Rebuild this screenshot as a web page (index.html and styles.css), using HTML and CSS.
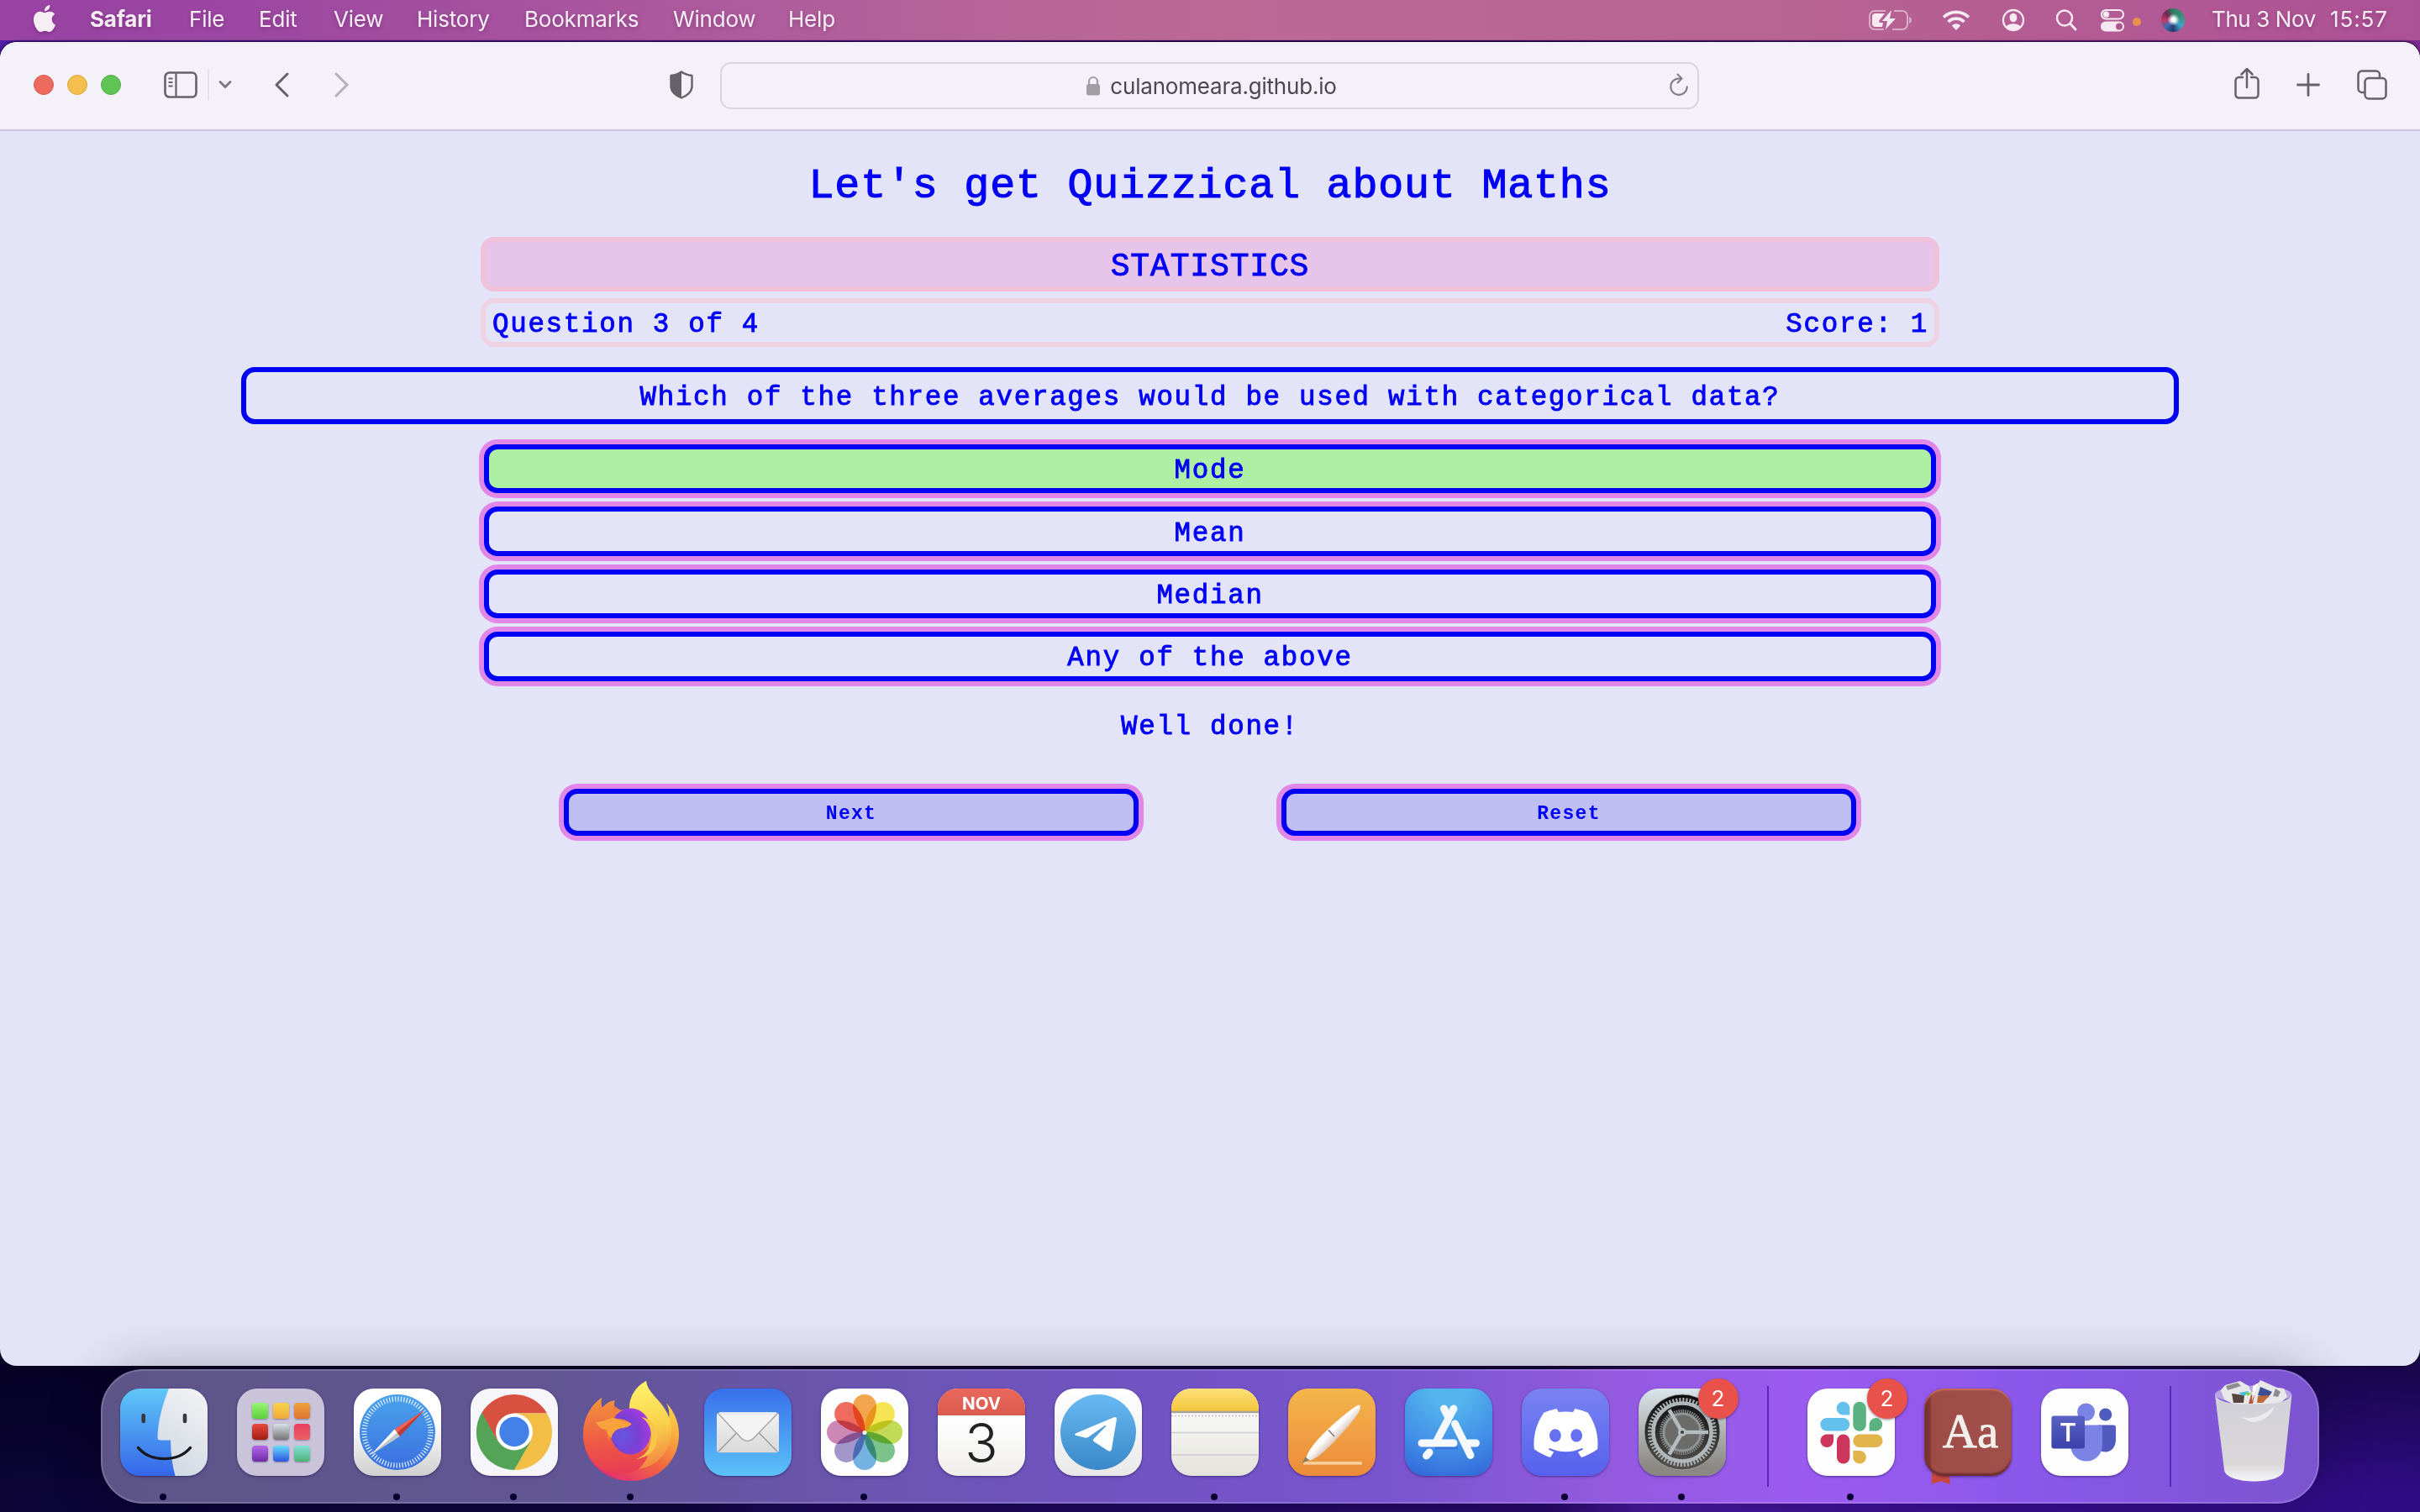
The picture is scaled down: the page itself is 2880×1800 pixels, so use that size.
FILE: index.html
```html
<!DOCTYPE html>
<html lang="en">
<head>
<meta charset="utf-8">
<title>Let's get Quizzical about Maths</title>
<link rel="stylesheet" href="styles.css">
</head>
<body>
<header class="menubar">
  <svg class="apple" viewBox="0 0 24 24"><path d="M12.152 6.896c-.948 0-2.415-1.078-3.96-1.04-2.04.027-3.91 1.183-4.961 3.014-2.117 3.675-.546 9.103 1.519 12.09 1.013 1.454 2.208 3.09 3.792 3.039 1.52-.065 2.09-.987 3.935-.987 1.831 0 2.35.987 3.96.948 1.637-.026 2.676-1.48 3.676-2.948 1.156-1.688 1.636-3.325 1.662-3.415-.039-.013-3.182-1.221-3.22-4.857-.026-3.04 2.48-4.494 2.597-4.559-1.429-2.09-3.623-2.324-4.39-2.376-2-.156-3.675 1.09-4.61 1.09zM15.53 3.83c.843-1.012 1.4-2.427 1.245-3.83-1.207.052-2.662.805-3.532 1.818-.78.896-1.454 2.338-1.273 3.714 1.338.104 2.715-.688 3.559-1.701"/></svg>
  <nav class="menus">
    <span class="menu m-app">Safari</span><span class="menu m-file">File</span><span class="menu m-edit">Edit</span><span class="menu m-view">View</span><span class="menu m-history">History</span><span class="menu m-bookmarks">Bookmarks</span><span class="menu m-window">Window</span><span class="menu">Help</span>
  </nav>
  <div class="status">
    <svg class="battery" width="52" height="26" viewBox="0 0 52 26"><g fill="none" stroke="#f7e9f2" stroke-opacity=".55" stroke-width="2"><path d="M20 2H7a6 6 0 0 0-6 6v10a6 6 0 0 0 6 6h11M30 2h10a6 6 0 0 1 6 6v10a6 6 0 0 1-6 6H28"/></g><path fill="#f7e9f2" fill-opacity=".55" d="M48 9c4 1 4 7 0 8z"/><path fill="#f7e9f2" d="M19 5H8a4 4 0 0 0-4 4v8a4 4 0 0 0 4 4h8l1-5h-4l-1-2z"/><path fill="#f7e9f2" d="M27 1 16 14h6l-2 10 12-13h-7z"/></svg>
    <svg class="wifi" width="34" height="26" viewBox="0 0 34 26"><g fill="none" stroke="#f7e9f2" stroke-width="3.6"><path d="M2 9.5a21.5 21.5 0 0 1 30 0M7.5 15a13.5 13.5 0 0 1 19 0"/></g><path fill="#f7e9f2" d="M17 25l-5.2-5.6a7.5 7.5 0 0 1 10.400 0z"/></svg>
    <svg class="user" width="28" height="28" viewBox="0 0 28 28"><circle cx="14" cy="14" r="12" fill="none" stroke="#f7e9f2" stroke-width="2.300"/><ellipse cx="14" cy="11" rx="4.400" ry="5.300" fill="#f7e9f2"/><path fill="#f7e9f2" d="M5 22c3-5 15-5 18 0-5 5-13 5-18 0z"/></svg>
    <svg class="search" width="28" height="28" viewBox="0 0 28 28"><circle cx="12" cy="11.500" r="9" fill="none" stroke="#f7e9f2" stroke-width="2.500"/><path d="M18.500 18l6.500 7" stroke="#f7e9f2" stroke-width="3" stroke-linecap="round"/></svg>
    <svg class="control" width="28" height="28" viewBox="0 0 28 28"><rect x="1" y="2" width="26" height="10.500" rx="5.200" fill="none" stroke="#f7e9f2" stroke-width="2"/><circle cx="6.500" cy="7.200" r="3.600" fill="#f7e9f2"/><rect x="0" y="15.500" width="28" height="12" rx="6" fill="#f7e9f2"/><circle cx="22" cy="21.500" r="4" fill="#b0578f"/></svg>
    <i class="mic-dot"></i>
    <i class="siri"></i>
    <span class="date">Thu 3 Nov</span><span class="time">15:57</span>
  </div>
</header>

<main class="window">
  <div class="toolbar">
    <div class="lights"><i class="red"></i><i class="yellow"></i><i class="green"></i></div>
    <svg class="sidebar" width="40" height="32" viewBox="0 0 40 32"><rect x="1.500" y="1.500" width="37" height="29" rx="5" fill="none" stroke="#656269" stroke-width="2.600"/><path d="M14.500 2v28M5.500 8.500h5M5.500 13h5M5.500 17.500h5" stroke="#656269" stroke-width="2.200"/></svg>
    <i class="divider"></i>
    <svg class="chev" width="16" height="12" viewBox="0 0 16 12"><path d="M2 2.500l6 6 6-6" fill="none" stroke="#7a777e" stroke-width="2.800" stroke-linecap="round"/></svg>
    <svg class="back" width="18" height="30" viewBox="0 0 18 30"><path d="M16 2L3 15l13 13" fill="none" stroke="#656269" stroke-width="3" stroke-linecap="round" stroke-linejoin="round"/></svg>
    <svg class="fwd" width="18" height="30" viewBox="0 0 18 30"><path d="M2 2l13 13L2 28" fill="none" stroke="#b4b1b8" stroke-width="3" stroke-linecap="round" stroke-linejoin="round"/></svg>
    <svg class="shield" width="28" height="34" viewBox="0 0 28 34"><path d="M14 1.500C10 4.500 6 5.500 1.500 6v13c0 6 6 11 12.500 13.500C20.500 30 26.500 25 26.500 19V6C22 5.500 18 4.500 14 1.500z" fill="none" stroke="#656269" stroke-width="2.400" stroke-linejoin="round"/><path d="M14 1.500C10 4.500 6 5.500 1.500 6v13c0 6 6 11 12.500 13.500z" fill="#656269"/></svg>
    <div class="address">
      <svg width="18" height="24" viewBox="0 0 18 24"><path d="M4 11V7a5 5 0 0 1 10 0v4" fill="none" stroke="#a09da3" stroke-width="2.200"/><rect x="1" y="10" width="16" height="13.500" rx="2.500" fill="#a09da3"/></svg>
      <span class="url">culanomeara.github.io</span>
      <svg class="reload" width="24" height="28" viewBox="0 0 24 28"><path d="M14.500 6.500H12a9.700 9.700 0 1 0 9.700 9.700M10.500 1.500l5 5-5 5" fill="none" stroke="#807d84" stroke-width="2.100" stroke-linecap="round" stroke-linejoin="round"/></svg>
    </div>
    <svg class="share" width="30" height="38" viewBox="0 0 30 38"><path d="M10 12H5.500a4 4 0 0 0-4 4v16.500a4 4 0 0 0 4 4h19a4 4 0 0 0 4-4V16a4 4 0 0 0-4-4H20M15 24V2M8.500 8.500L15 2l6.500 6.500" fill="none" stroke="#656269" stroke-width="2.500" stroke-linecap="round" stroke-linejoin="round"/></svg>
    <svg class="plus" width="28" height="28" viewBox="0 0 28 28"><path d="M14 1.500v25M1.500 14h25" stroke="#656269" stroke-width="2.800" stroke-linecap="round"/></svg>
    <svg class="tabs" width="36" height="36" viewBox="0 0 36 36"><rect x="9.500" y="10" width="25" height="24.500" rx="4.500" fill="none" stroke="#656269" stroke-width="2.500"/><path d="M9.500 27H6a4.500 4.500 0 0 1-4.500-4.500V6A4.500 4.500 0 0 1 6 1.500h16.500A4.500 4.500 0 0 1 27 6v4" fill="none" stroke="#656269" stroke-width="2.500"/></svg>
  </div>

  <section class="page">
    <h1>Let's get Quizzical about Maths</h1>
    <div class="topic">STATISTICS</div>
    <div class="progress"><span>Question 3 of 4</span><span>Score: 1</span></div>
    <div class="question">Which of the three averages would be used with categorical data?</div>
    <div class="answers">
      <div class="answer correct">Mode</div>
      <div class="answer">Mean</div>
      <div class="answer">Median</div>
      <div class="answer">Any of the above</div>
    </div>
    <p class="feedback">Well done!</p>
    <div class="actions"><div class="action">Next</div><div class="action">Reset</div></div>
  </section>
</main>

<footer class="dock">
  <div class="app running"><div class="icon finder">
    <svg viewBox="0 0 104 104"><defs><linearGradient id="fb" x1="0" y1="0" x2="0" y2="1"><stop offset="0" stop-color="#5fc8f8"/><stop offset="1" stop-color="#3566ea"/></linearGradient><linearGradient id="fw" x1="1" y1="0" x2=".6" y2="1"><stop offset="0" stop-color="#f4f3f4"/><stop offset="1" stop-color="#d3dbe5"/></linearGradient></defs><rect width="104" height="104" fill="url(#fb)"/><path d="M58 0C51 17 45 38 44.500 58q0 3.500 3.500 3.500h12C60 77 62 91 65.500 104H104V0z" fill="url(#fw)"/><path d="M27.700 32v7M77 32v7" stroke="#38383c" stroke-width="4.600" stroke-linecap="round"/><path d="M21.500 70.500c15 17.500 47 17.500 62 0" fill="none" stroke="#17171c" stroke-width="3.400" stroke-linecap="round"/></svg></div></div>
  <div class="app"><div class="icon launchpad"><i class="c1"></i><i class="c2"></i><i class="c3"></i><i class="c4"></i><i class="c5"></i><i class="c6"></i><i class="c7"></i><i class="c8"></i><i class="c9"></i></div></div>
  <div class="app running"><div class="icon safari">
    <svg viewBox="0 0 104 104"><defs><linearGradient id="sf" x1="0" y1="0" x2="0" y2="1"><stop offset="0" stop-color="#4aa3ec"/><stop offset="1" stop-color="#3a6fe0"/></linearGradient></defs><circle cx="52" cy="52" r="45" fill="url(#sf)"/><circle cx="52" cy="52" r="39.500" fill="none" stroke="#e6f1fc" stroke-width="6" stroke-dasharray="1.200 2.250"/><path d="M84 26L48.500 48.500 54.800 57z" fill="#c13a33"/><path d="M84 26L48.500 48.500l3 4z" fill="#f26359"/><path d="M20.500 79l28-30.500 6.300 8.500z" fill="#c4c6ca"/><path d="M20.500 79l28-30.500 3 4z" fill="#fdfdfd"/></svg></div></div>
  <div class="app running"><div class="icon chrome">
    <svg viewBox="0 0 104 104"><path d="M13 29.500A45 45 0 0 1 91 29.500H52L32.500 63z" fill="#d8503f"/><path d="M91 29.500A45 45 0 0 1 52 97L71.500 63 52 29.500z" fill="#f2be45"/><path d="M13.500 28.500A45 45 0 0 0 52 97L71.500 63H32.500z" fill="#55a356"/><circle cx="52" cy="51.500" r="22" fill="#fff"/><circle cx="52" cy="51.500" r="17.700" fill="#4380e8"/></svg></div></div>
  <div class="app running"><div class="icon bare">
    <svg viewBox="0 0 104 104"><defs><linearGradient id="ff" x1=".9" y1="0" x2=".3" y2="1"><stop offset="0" stop-color="#fdf05a"/><stop offset=".35" stop-color="#f9b440"/><stop offset=".65" stop-color="#f26a3d"/><stop offset="1" stop-color="#e22f72"/></linearGradient><linearGradient id="fl" x1=".5" y1="0" x2=".6" y2="1"><stop offset="0" stop-color="#fdf36a"/><stop offset=".5" stop-color="#f9d14b"/><stop offset="1" stop-color="#f1813f"/></linearGradient><linearGradient id="fh" x1=".4" y1="0" x2=".5" y2="1"><stop offset="0" stop-color="#f3933b"/><stop offset=".55" stop-color="#ee5a44"/><stop offset="1" stop-color="#e83c55"/></linearGradient><radialGradient id="fg" cx=".3" cy=".6" r=".8"><stop offset="0" stop-color="#6757e0"/><stop offset=".5" stop-color="#7a3fd4"/><stop offset="1" stop-color="#b43ae0"/></radialGradient></defs>
    <path d="M17 11c-1 5-1 9 1 12 4-5 9-8 14.600-8.500C31 19 32 24 34 27l16-3C50 10 57-2 70-9c1 17 22 25 27 45 1-7 0-13-3-19 10 11 15 24 15 38 0 32-25 55-57 55S-5 87-5 55C-5 36 4 20 17 11z" fill="url(#ff)"/>
    <path d="M50 24C50 10 57-2 70-9c1 17 29 27 30 58 1 24-17 47-45 47 16-10 22-24 21-41C75 39 64 27 50 24z" fill="url(#fl)"/>
    <path d="M17 11c-1 5-1 9 1 12 4-5 9-8 14.600-8.500C31 19 32 24 34 27c6 12 14 14 18 17-2 5-12 5-15 6-8 5-7 24 15 27 9 1 17-2 23-9-3 20-14 34-34 34C12 102-5 80-5 52-4 35 4 20 17 11z" fill="url(#fh)"/>
    <ellipse cx="51.500" cy="51" rx="24.300" ry="27.500" fill="url(#fg)"/>
    <path d="M30 32c6-4 10-6 10-6l-8-5-14 20 9 24c-2-9 2-15 8-18 6-2 15-2 17.500-5C48 38 42 36 38 36c-4 0-7-1-8-4z" fill="#f0803c"/>
    <path d="M10 40c8 0 15-4 21-5 5 3 15 3 21.500 7-3 5-12 5-15 6-5 2-8 6-9 11-4-3-5-8-5-10-7 0-11-4-13.500-9z" fill="#f7a23c"/>
    <path d="M64 34c14 2 22 15 18 32-3 11-14 17-24 18 12-4 18-14 18-28 0-9-4-17-12-22z" fill="#f7c649"/></svg></div></div>
  <div class="app"><div class="icon mail">
    <svg viewBox="0 0 104 104"><defs><linearGradient id="ml" x1="0" y1="0" x2="0" y2="1"><stop offset="0" stop-color="#f2f2f2"/><stop offset="1" stop-color="#d9d9da"/></linearGradient></defs><rect x="15" y="28.700" width="74" height="47.500" rx="3.500" fill="url(#ml)"/><path d="M17 75l21.500-22M87 75L65.500 53" stroke="#9d9da0" stroke-width="1.600"/><path d="M17 30l27 29q7.500 7 15 0l28-29z" fill="#f4f4f4" stroke="#a9a9ac" stroke-width="1.600"/><path d="M18 29.500h68" stroke="#f4f4f4" stroke-width="2.500"/></svg></div></div>
  <div class="app running"><div class="icon white">
    <svg viewBox="0 0 104 104"><defs><path id="pt" d="M52 52C44 46 38 34 38 21a14 14 0 0 1 28 0C66 34 60 46 52 52z"/></defs><g class="petals"><use href="#pt" fill="#f2a043"/><use href="#pt" fill="#f5e34a" transform="rotate(45 52 52)"/><use href="#pt" fill="#bfd84c" transform="rotate(90 52 52)"/><use href="#pt" fill="#74c084" transform="rotate(135 52 52)"/><use href="#pt" fill="#6cafe0" transform="rotate(180 52 52)"/><use href="#pt" fill="#9d90c8" transform="rotate(225 52 52)"/><use href="#pt" fill="#cc82b2" transform="rotate(270 52 52)"/><use href="#pt" fill="#ef6354" transform="rotate(315 52 52)"/></g><circle cx="52" cy="52.500" r="2.600" fill="#f4f4f0"/></svg></div></div>
  <div class="app"><div class="icon calendar"><b>NOV</b><span>3</span></div></div>
  <div class="app"><div class="icon telegram">
    <svg viewBox="0 0 104 104"><defs><linearGradient id="tg" x1="0" y1="0" x2="0" y2="1"><stop offset="0" stop-color="#68b9f3"/><stop offset="1" stop-color="#3a88c8"/></linearGradient></defs><circle cx="52" cy="52" r="45" fill="url(#tg)"/><path d="M26 53l44-18.500q4.500-1.500 3.800 2.800L68 72q-1 4-4.500 2L46.500 63q-1.500-1.500 0-3L61.500 44.500q-1-1-3 .5L40 58q-2 1-4 .5L26 56q-4-1.500 0-3z" fill="#fdfeff"/></svg></div></div>
  <div class="app running"><div class="icon notes">
    <svg viewBox="0 0 104 104"><defs><linearGradient id="ny" x1="0" y1="0" x2="0" y2="1"><stop offset="0" stop-color="#fbe07a"/><stop offset="1" stop-color="#f5c63b"/></linearGradient></defs><rect width="104" height="27" fill="url(#ny)"/><path d="M0 28h104" stroke="#a7a399" stroke-width="2.500"/><path d="M0 32.500h104" stroke="#bdbbb8" stroke-width="1.700" stroke-dasharray="1.800 2.200"/><path d="M0 52.500h104M0 79h104" stroke="#cfcecf" stroke-width="1.500"/></svg></div></div>
  <div class="app"><div class="icon pages">
    <svg viewBox="0 0 104 104"><defs><linearGradient id="pn" x1=".42" y1=".42" x2=".6" y2=".6"><stop offset=".3" stop-color="#fff"/><stop offset="1" stop-color="#d6c4b8"/></linearGradient></defs><rect x="18" y="87" width="70" height="3.600" fill="#f8cf9b"/><path d="M83 20c4-1.500 3.500 4 1 8-5 9-17 22-28 34-9 10-24 23-30 23.500l-4.500-2C22 76 33 62 46 50c10-10 30-27 37-30z" fill="url(#pn)"/><path d="M16.500 89l4-7.500 4.500 3.500z" fill="#8b7a63"/><path d="M48 49.500l7 7.500" stroke="#8e8072" stroke-width="1.800"/></svg></div></div>
  <div class="app"><div class="icon appstore">
    <svg viewBox="0 0 104 104"><g stroke="#f5f8fd" stroke-width="9" stroke-linecap="round"><path d="M46.500 24l4 8M59.500 42L78 79.500"/><path d="M76 65h8.500M20 65h38"/><path d="M58 24L38.500 61M29 76l-3.500 4"/></g><path d="M36 71h27" stroke="#3a72dd" stroke-width="2.500"/></svg></div></div>
  <div class="app running"><div class="icon discord">
    <svg viewBox="0 0 104 104"><path fill="#fff" transform="translate(14.500 15) scale(3.167)" d="M20.317 4.3698a19.7913 19.7913 0 00-4.8851-1.5152.0741.0741 0 00-.0785.0371c-.211.3753-.4447.8648-.6083 1.2495-1.8447-.2762-3.68-.2762-5.4868 0-.1636-.3933-.4058-.8742-.6177-1.2495a.077.077 0 00-.0785-.037 19.7363 19.7363 0 00-4.8852 1.515.0699.0699 0 00-.0321.0277C.5334 9.0458-.319 13.5799.0992 18.0578a.0824.0824 0 00.0312.0561c2.0528 1.5076 4.0413 2.4228 5.9929 3.0294a.0777.0777 0 00.0842-.0276c.4616-.6304.8731-1.2952 1.226-1.9942a.076.076 0 00-.0416-.1057c-.6528-.2476-1.2743-.5495-1.8722-.8923a.077.077 0 01-.0076-.1277c.1258-.0943.2517-.1923.3718-.2914a.0743.0743 0 01.0776-.0105c3.9278 1.7933 8.18 1.7933 12.0614 0a.0739.0739 0 01.0785.0095c.1202.099.246.1981.3728.2924a.077.077 0 01-.0066.1276 12.2986 12.2986 0 01-1.873.8914.0766.0766 0 00-.0407.1067c.3604.698.7719 1.3628 1.225 1.9932a.076.076 0 00.0842.0286c1.961-.6067 3.9495-1.5219 6.0023-3.0294a.077.077 0 00.0313-.0552c.5004-5.177-.8382-9.6739-3.5485-13.6604a.061.061 0 00-.0312-.0286zM8.02 15.3312c-1.1825 0-2.1569-1.0857-2.1569-2.419 0-1.3332.9555-2.4189 2.157-2.4189 1.2108 0 2.1757 1.0952 2.1568 2.419 0 1.3332-.9555 2.4189-2.1569 2.4189zm7.9748 0c-1.1825 0-2.1569-1.0857-2.1569-2.419 0-1.3332.9554-2.4189 2.1569-2.4189 1.2108 0 2.1757 1.0952 2.1568 2.419 0 1.3332-.946 2.4189-2.1568 2.4189Z"/></svg></div></div>
  <div class="app running"><div class="icon settings">
    <svg viewBox="0 0 104 104"><defs><linearGradient id="st" x1="0" y1="0" x2="0" y2="1"><stop offset="0" stop-color="#0a0b0c"/><stop offset="1" stop-color="#56534f"/></linearGradient></defs><circle cx="52" cy="52" r="45" fill="url(#st)" stroke="#aab0b2" stroke-width=".8"/><circle cx="52" cy="52" r="38.500" fill="none" stroke="#a7adaf" stroke-width="5" stroke-dasharray="2.200 1.832"/><circle cx="52" cy="52" r="34.500" fill="none" stroke="#b0b7ba" stroke-width="4.500"/><circle cx="52" cy="52" r="25" fill="none" stroke="#878c8d" stroke-width="4" stroke-dasharray="1.500 1.117"/><circle cx="52" cy="52" r="22" fill="#6b6b6a" stroke="#8f9495" stroke-width="3"/><path d="M52 52h31M52 52L36.500 25.500M52 52L36.500 78.500" stroke="#b5bcbf" stroke-width="4.500"/><circle cx="52" cy="52" r="5" fill="#b5bcbf"/><circle cx="52" cy="52" r="2" fill="#3a3b3c"/></svg></div><em class="badge">2</em></div>
  <div class="rule"><i></i></div>
  <div class="app running"><div class="icon white">
    <svg viewBox="0 0 104 104"><g fill="#63c1ec"><path d="M50.300 31.400H42.600a7.800 7.800 0 1 1 7.700-7.800z"/><rect x="15.300" y="35" width="35" height="15.600" rx="7.800"/></g><g fill="#5ab283"><rect x="54.300" y="15.700" width="15.500" height="35" rx="7.700"/><path d="M73.600 50.600V43a7.800 7.800 0 1 1 7.800 7.600z"/></g><g fill="#cd365c"><path d="M31 54.500v7.700a7.800 7.800 0 1 1-7.800-7.700z"/><rect x="35" y="54.500" width="15.400" height="35" rx="7.700"/></g><g fill="#e2b44c"><rect x="54.300" y="54.500" width="35.200" height="15.500" rx="7.700"/><path d="M54.300 74h7.700a7.800 7.800 0 1 1-7.700 7.700z"/></g></svg></div><em class="badge">2</em></div>
  <div class="app"><i class="ribbon"></i><div class="icon dictionary">Aa</div></div>
  <div class="app"><div class="icon white">
    <svg viewBox="0 0 104 104"><defs><linearGradient id="tm" x1="0" y1="0" x2="0" y2="1"><stop offset="0" stop-color="#5a62c4"/><stop offset="1" stop-color="#3a41ab"/></linearGradient></defs><circle cx="76.700" cy="31" r="7.600" fill="#515abf"/><path d="M68 43.500h18q3 0 3 3V61c0 9-6 14.500-12 14.500-4 0-7-1-9-4z" fill="#515abf"/><circle cx="53.600" cy="28" r="10.500" fill="#7b83e4"/><path d="M38 43.500h32q3 0 3 3V67c0 12-9 19.500-19 19.500S35 79 35 67z" fill="#7b83e4"/><rect x="12.400" y="32.500" width="39.600" height="39" rx="3" fill="url(#tm)"/><text x="32.200" y="62.500" class="t-letter">T</text></svg></div></div>
  <div class="rule"><i></i></div>
  <div class="app"><div class="icon bare">
    <svg viewBox="0 0 104 104"><defs><linearGradient id="tr" x1="0" y1="0" x2="0" y2="1"><stop offset="0" stop-color="#d2d1d8"/><stop offset=".8" stop-color="#d9d7d8"/><stop offset="1" stop-color="#f6f6f8"/></linearGradient></defs><ellipse cx="51.700" cy="7" rx="45.700" ry="10.500" fill="#b9a5e6"/><path d="M13 2l5-6 18-5 10 6 4 9 10-16 20 9 8 1 4 10-10 9-50 2-15-8z" fill="#e8e8ea"/><path d="M19-3l14-4 4 4-16 5zM78 0l6 4-3 6-6-1z" fill="#8d8d90"/><path d="M26 6l15 2-1 9H28z" fill="#54453f"/><path d="M34 5l13-2-6 6z" fill="#45bcd8"/><path d="M42 5l8 0-5 4z" fill="#7bce4e"/><path d="M60-2l14 6-5 7-12-3z" fill="#3b4f92"/><path d="M57 9l14-1-8 9h-7z" fill="#c06a38"/><path d="M49 7l4 1-2 10h-5z" fill="#b05c41"/><path d="M51-3l7-4-8 22z" fill="#fafafa"/><path d="M6 7c5 12 29 11.500 45 11.500S92 19 97.500 7L88 97c-1 18-69 18-71 0z" fill="url(#tr)"/><path d="M36 34c16 4 30-3 41-13-4 12-18 22-30 18z" fill="#ececee"/></svg></div></div>
</footer>
</body>
</html>
```
FILE: styles.css
```css
* { box-sizing: border-box; }
body {
  margin: 0; width: 2880px; height: 1800px; overflow: hidden;
  display: flex; flex-direction: column;
  font-family: Inter, "Liberation Sans", sans-serif;
  background:
    linear-gradient(90deg, #4d1ca8 0, #340866 60%, #7a2a90 100%) top / 100% 90px no-repeat,
    linear-gradient(180deg, rgba(2,0,20,.6) 1600px, rgba(2,0,20,0) 1780px),
    linear-gradient(90deg, #0b0435 0, #0e0540 28%, #1a0858 32%, #28096b 64%, #4b18a0 68%, #3c0f95 80%, #2e0c84 100%);
}
svg { display: block; flex: none; }

.menubar {
  height: 48px; flex: none; display: flex; align-items: center; padding: 0 38px 0 37px;
  color: #f7eef5; font-size: 26px; line-height: 48px;
  background: linear-gradient(90deg, #9843a4 0, #9c47a2 10%, #b2609b 35%, #bb6a96 50%, #b76393 75%, #ad5195 100%);
}
.apple { width: 32px; height: 32px; fill: #f7eef5; margin: -4px 38px 0 0; filter: drop-shadow(0 2px 2px rgba(60,0,60,.3)); }
.menus { display: flex; text-shadow: 0 2px 5px rgba(60,0,60,.3); margin-top: -2px; }
.menu { letter-spacing: -.2px; white-space: nowrap; }
.m-app { width: 118px; font-weight: 700; }
.m-file { width: 83px; }
.m-edit { width: 89px; }
.m-view { width: 99px; }
.m-history { width: 128px; }
.m-bookmarks { width: 177px; }
.m-window { width: 137px; }
.status { display: flex; align-items: center; margin-left: auto; text-shadow: 0 2px 5px rgba(60,0,60,.3); }
.battery { margin-right: 35px; }
.wifi { margin-right: 37px; }
.user { margin-right: 35px; }
.search { margin-right: 27px; }
.control { margin-right: 10px; }
.mic-dot { width: 10px; height: 10px; margin-top: 4px; margin-right: 24px; border-radius: 50%; background: #e8914d; }
.siri {
  width: 28px; height: 28px; margin-right: 32px; border-radius: 50%;
  background: radial-gradient(circle at 52% 48%, #fff 0 10%, rgba(255,255,255,0) 35%),
    conic-gradient(#2f7f62, #3d8f80 20%, #3ca5c9 35%, #25386e 50%, #3c6fb0 62%, #c23a68 75%, #6c2450 88%, #2f7f62);
}
.date { width: 141px; letter-spacing: -.4px; margin-top: -2px; white-space: nowrap; }
.time { width: 69px; letter-spacing: .9px; margin-top: -2px; white-space: nowrap; }

.window {
  margin-top: 2px; height: 1576px; flex: none; border-radius: 20px; overflow: hidden;
  background: #e4e4f9; box-shadow: 0 0 3px 1px rgba(20,0,30,.8);
}
.toolbar {
  height: 106px; display: flex; align-items: center; padding: 0 39px 2px 40px;
  background: #f4f1f8; border-bottom: 2px solid #c9c7de;
}
.lights { display: flex; gap: 16px; }
.lights i { width: 24px; height: 24px; border-radius: 50%; }
.red { background: #ed6a5e; border: 1px solid #d9574c; }
.yellow { background: #f5bf4f; border: 1px solid #dda63b; }
.green { background: #61c555; border: 1px solid #4fae43; }
.sidebar { margin: -1px 0 0 51px; }
.divider { width: 2px; height: 36px; margin: 0 11px 0 12px; background: #e4e1e8; }
.chev { margin-right: 50px; }
.back { margin-right: 54px; }
.fwd { margin-right: 381px; }
.shield { margin-right: 32px; }
.address {
  width: 1166px; height: 56px; display: flex; align-items: center; justify-content: center; position: relative;
  margin: 1px 637px 0 0; border: 2px solid #d8d5dc; border-radius: 13px; gap: 11px; padding-left: 4px;
}
.url { font-size: 26px; letter-spacing: -.2px; color: #4a474d; line-height: 52px; margin-top: 3px; }
.reload { position: absolute; right: 10px; top: 11px; }
.share { margin: -4px 44px 0 0; }
.plus { margin-right: 44px; }

.page {
  display: flex; flex-direction: column; align-items: center; color: #0000f5;
  font-family: "Liberation Mono", "DejaVu Sans Mono", monospace; font-size: 32.500px; letter-spacing: 1.700px;
  -webkit-text-stroke: .900px #0000f5;
}
h1 { margin: 34px 0 32px; height: 60px; line-height: 60px; font-size: 50px; font-weight: 400; letter-spacing: .800px; padding-top: 2px; -webkit-text-stroke-width: 1.100px; }
.topic, .progress, .question, .answer, .action { border-radius: 16px; border: 6px solid #0000f5; display: flex; align-items: center; justify-content: center; padding-top: 5px; white-space: pre; }
.topic { width: 1736px; height: 65px; background: #e7c5eb; border-color: #efc2da; font-size: 38px; letter-spacing: .850px; }
.progress { width: 1736px; height: 58px; margin-top: 8px; border-color: #edd3e2; justify-content: space-between; padding: 5px 7px 0 8px; }
.question { width: 2306px; height: 68px; margin-top: 24px; }
.answers { width: 1728px; margin-top: 24px; display: flex; flex-direction: column; gap: 16px; }
.answer { height: 58.400px; box-shadow: 0 0 0 6px #e087e8; }
.correct { background: #adf0a3; }
.feedback { margin: 35px 0 53px; height: 40px; line-height: 40px; }
.actions { display: flex; gap: 170px; }
.action { width: 684px; height: 56px; padding-top: 4px; background: #bfbff5; box-shadow: 0 0 0 6px #e087e8; font-size: 23px; font-weight: 700; letter-spacing: 1.300px; -webkit-text-stroke-width: 0; }

.dock {
  position: relative; width: 2640px; height: 160px; margin: 4px auto 0; flex: none; display: flex; padding-left: 3.500px;
  border: 2px solid rgba(255,255,255,.16); border-radius: 50px;
  background: linear-gradient(90deg, #5d5588 0, #615693 20%, #6b55b3 36%, #7153c0 45%, #7855ce 58%, #935ae0 68%, #9b5bf0 77%, #8a58ea 87%, #7b54cf 100%) border-box;
  box-shadow: 0 0 60px 4px rgba(0,0,0,.24);
}
.app { width: 139px; flex: none; position: relative; padding: 20.500px 17.500px 0; }
.icon { width: 104px; height: 104px; border-radius: 24px; overflow: hidden; box-shadow: 0 1px 3px rgba(20,0,60,.5); position: relative; }
.icon svg { width: 104px; height: 104px; overflow: visible; }
.bare { overflow: visible; box-shadow: none; }
.white { background: #fdfdfd; }
.running::after { content: ""; position: absolute; left: 64px; top: 146px; width: 8px; height: 8px; border-radius: 50%; background: #0a0030; }
.launchpad { background: #c9c4da; display: grid; grid-template-columns: repeat(3, 19px); grid-auto-rows: 19px; gap: 6.400px; padding: 17.500px; }
.launchpad i { border-radius: 4px; box-shadow: 0 1px 2px rgba(60,50,80,.5); }
.c1 { background: linear-gradient(#98f573, #5fce3c); }
.c2 { background: linear-gradient(#f6d34b, #f0a93a); }
.c3 { background: linear-gradient(#eda33c, #df7433); }
.c4 { background: linear-gradient(#e84a3c, #a11c15); }
.c5 { background: linear-gradient(#d6e2ea, #737373); }
.c6 { background: linear-gradient(#e8405c, #ec5f66); }
.c7 { background: linear-gradient(#b767e8, #6d2ba8); }
.c8 { background: linear-gradient(#67dcfc, #2d53df); }
.c9 { background: linear-gradient(#84dfd9, #4fb278); }
.safari { background: linear-gradient(#fff 40%, #cfcfcf); }
.chrome { background: #f6f5f9; }
.mail { background: linear-gradient(#3870ec, #5bc2f8); }
.petals { isolation: isolate; }
.petals use { mix-blend-mode: multiply; opacity: .95; }
.calendar { background: linear-gradient(#fdfdfd 40%, #efeeec); display: flex; flex-direction: column; align-items: center; }
.calendar b { width: 104px; height: 32.500px; background: linear-gradient(#e9685b, #da5b4e); color: #fff; font-size: 20.500px; line-height: 36px; text-align: center; }
.calendar span { font-size: 65px; line-height: 65px; font-weight: 300; color: #222; }
.telegram { background: linear-gradient(#fff, #e9e9ea); }
.notes { background: linear-gradient(#f8f8f7 30%, #e3e2db); }
.pages { background: linear-gradient(#f4b54c, #ec8b3a); }
.appstore { background: radial-gradient(circle at 50% 0, #53b3ec 20%, #4390e8 60%, #2a5ad3 110%); }
.discord { background: linear-gradient(#7983f2, #5661ee); }
.settings { background: linear-gradient(#dbe5ea, #8b8884 90%); }
.badge { position: absolute; left: 88px; top: 9px; width: 48px; height: 48px; border-radius: 50%; background: #e8524a; color: #fff; font-style: normal; font-size: 26px; line-height: 48px; text-align: center; box-shadow: 0 1px 3px rgba(40,0,40,.5); }
.rule { width: 62px; flex: none; padding: 18px 0 0 31px; }
.rule i { display: block; width: 2px; height: 120px; background: #5f22bd; }
.dictionary { background: linear-gradient(90deg, #6d2b29 0, #873a37 7%, #9f4c49 9%, #a04f4b); box-shadow: inset 0 2px 2px #cc6a62, inset 0 -3px 2px #6d2f2d, 0 1px 3px rgba(20,0,60,.5); color: #f1efec; font-family: "Liberation Serif", serif; font-size: 57px; line-height: 102px; text-align: center; padding-left: 6px; -webkit-text-stroke: .8px #f1efec; }
.ribbon { position: absolute; left: 26px; top: 118px; width: 22px; height: 17px; background: #c8493c; clip-path: polygon(0 0, 100% 0, 100% 100%, 50% 78%, 0 100%); }
.t-letter { font: 600 30px Inter, sans-serif; fill: #fff; text-anchor: middle; }
```
